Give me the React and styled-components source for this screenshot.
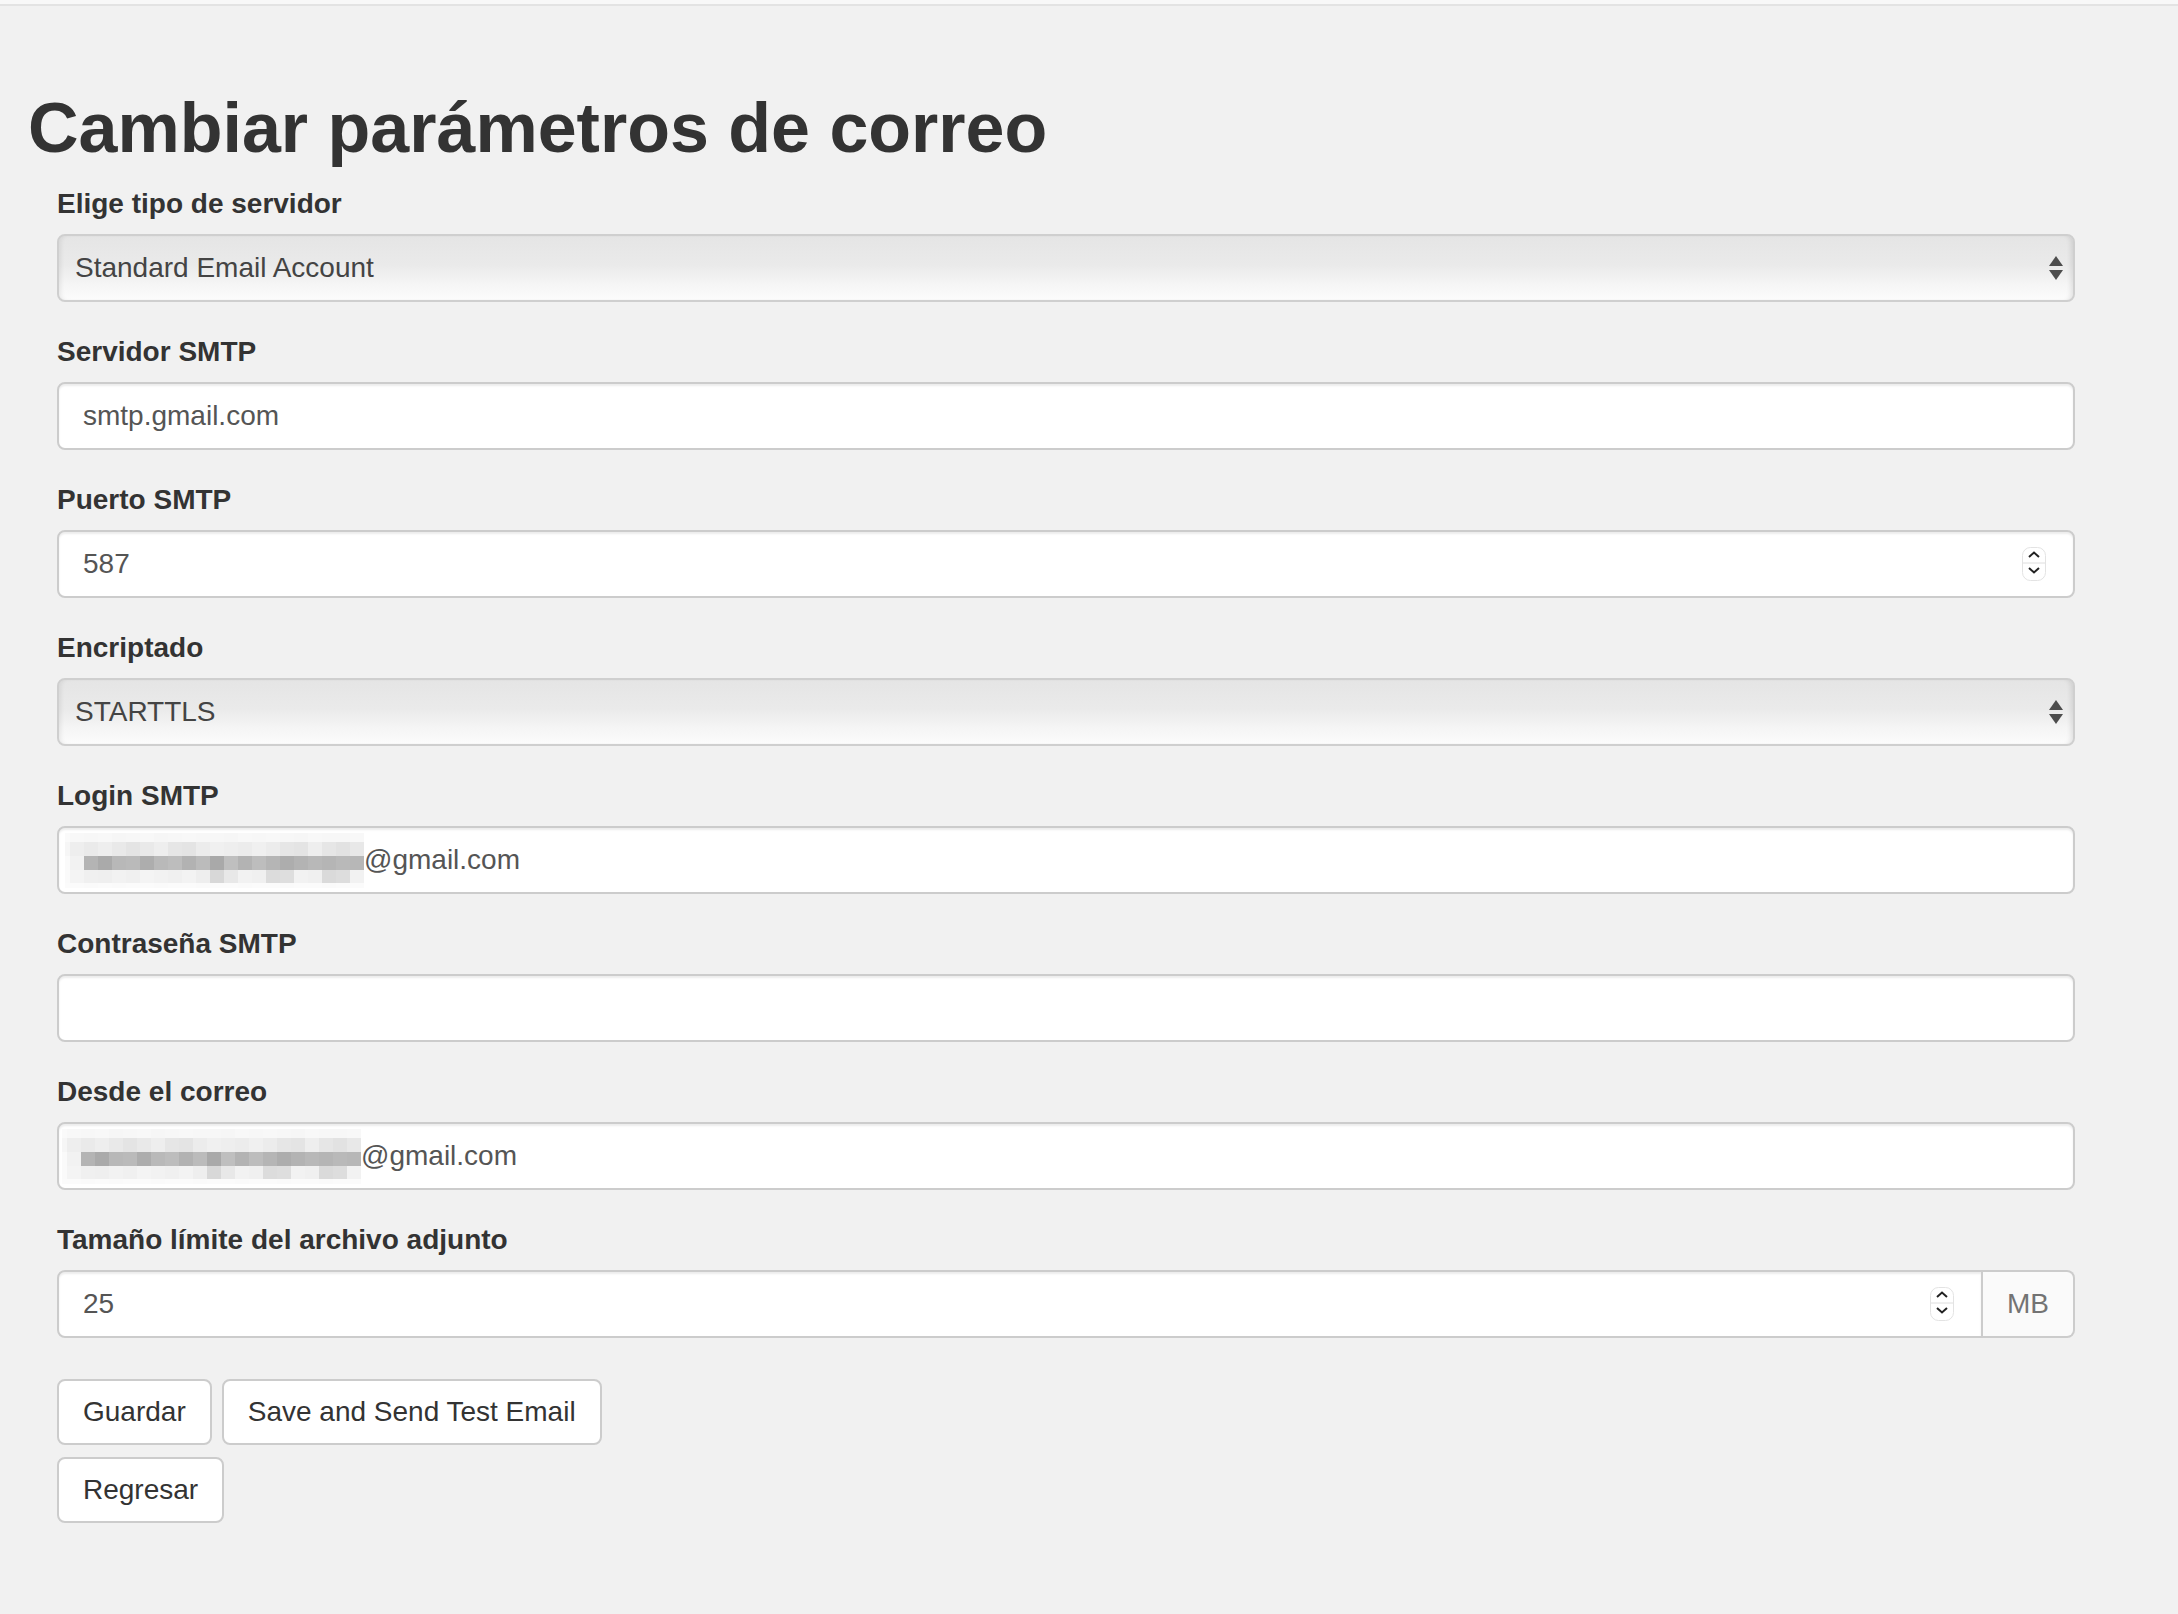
import React from 'react';
import styled, { createGlobalStyle } from 'styled-components';

const GlobalStyle = createGlobalStyle`
    body {
        margin: 0;
        background: #f1f1f1;
        font-family: "Liberation Sans", Arial, Helvetica, sans-serif;
        color: #333;
    }
`;

const TopBar = styled.div`
    height: 4px;
    background: #f8f8f8;
    border-bottom: 2px solid #e3e3e3;
`;

const Page = styled.div`
    padding: 0 28px 80px;
`;

const Title = styled.h1`
    margin: 84px 0 17px;
    font-size: 70px;
    line-height: 77px;
    font-weight: 700;
    color: #333;
`;

const Form = styled.form`
    margin-left: 29px;
    width: 2018px;
`;

const FormGroup = styled.div`
    margin-bottom: 30px;
`;

const Label = styled.label`
    display: block;
    margin-bottom: 10px;
    font-size: 28px;
    line-height: 40px;
    font-weight: 700;
    color: #333;
`;

const Field = styled.div`
    display: flex;
    align-items: center;
    box-sizing: border-box;
    height: 68px;
    padding: 0 ${p => (p.$spin ? '27px' : '24px')} 0 ${p => (p.$masked ? '6px' : '24px')};
    background: #fff;
    border: 2px solid #ccc;
    border-radius: ${p => (p.$grouped ? '8px 0 0 8px' : '8px')};
    box-shadow: inset 0 2px 2px rgba(0, 0, 0, 0.075);
    flex: 1;
`;

const FieldInput = styled.input`
    flex: 1;
    min-width: 0;
    border: none;
    background: transparent;
    padding: 0;
    outline: none;
    font-family: inherit;
    font-size: 28px;
    color: #555;
`;

const SelectBox = styled.div`
    display: flex;
    align-items: center;
    justify-content: space-between;
    box-sizing: border-box;
    height: 68px;
    padding: 0 10px 0 16px;
    border: 2px solid #cfcfcf;
    border-radius: 8px;
    background: linear-gradient(to bottom, #e5e5e5 0%, #eaeaea 45%, #f5f5f5 75%, #fcfcfc 100%);
    box-shadow: inset 4px 0 4px -2px rgba(0, 0, 0, 0.07), inset -5px 0 5px -3px rgba(0, 0, 0, 0.1);
    font-size: 28px;
    color: #444;
`;

const InputGroup = styled.div`
    display: flex;
`;

const Addon = styled.span`
    display: flex;
    align-items: center;
    box-sizing: border-box;
    height: 68px;
    padding: 0 24px;
    background: #fafafa;
    border: 2px solid #ccc;
    border-left: none;
    border-radius: 0 8px 8px 0;
    font-size: 28px;
    color: #737373;
`;

const Buttons = styled.div`
    display: flex;
    flex-wrap: wrap;
    gap: 12px 10px;
    width: 560px;
    margin-top: 41px;
`;

const Button = styled.button`
    box-sizing: border-box;
    height: 66px;
    padding: 0 24px;
    background: #fff;
    border: 2px solid #ccc;
    border-radius: 8px;
    font-family: inherit;
    font-size: 28px;
    color: #333;
`;

const SelectArrows = () => (
    <svg width="14" height="24" viewBox="0 0 14 24">
        <polygon points="0,10 7,0 14,10" fill="#4d4d4d" />
        <polygon points="0,14 14,14 7,24" fill="#4d4d4d" />
    </svg>
);

const Spinner = () => (
    <svg width="24" height="34" viewBox="0 0 24 34">
        <rect x="0.5" y="0.5" width="23" height="33" rx="8" fill="#fff" stroke="#e3e3e3" />
        <line x1="1" y1="16" x2="23" y2="16" stroke="#dedede" />
        <path d="M7 10 L12 5.5 L17 10" fill="none" stroke="#222" strokeWidth="2" />
        <path d="M7 21 L12 25.5 L17 21" fill="none" stroke="#222" strokeWidth="2" />
    </svg>
);

// pixelated redaction over the mail user name
const cellWidths = [5, 14, 14, 14, 14, 14, 14, 14, 14, 14, 14, 14, 14, 14, 14, 14, 14, 14, 14, 14, 14, 14];
const rowHeights = [9, 14, 14, 13, 5];
const shades = [
    ['fa', 'f8', 'f7', 'f8', 'f6', 'f7', 'f8', 'f6', 'f7', 'f8', 'f7', 'f7', 'f6', 'f8', 'f7', 'f8', 'f7', 'f6', 'f8', 'f7', 'f7', 'f8'],
    ['f6', 'ee', 'ea', 'ee', 'e9', 'e4', 'e9', 'ee', 'e6', 'e4', 'ec', 'f0', 'ee', 'ec', 'f0', 'ec', 'e6', 'e4', 'ee', 'e6', 'e2', 'e8'],
    ['fa', 'f2', 'b4', 'aa', 'b8', 'ba', 'ad', 'b9', 'bd', 'b2', 'bb', 'a9', 'bf', 'b3', 'bd', 'b5', 'ad', 'b3', 'b8', 'b5', 'b9', 'b7'],
    ['fa', 'f4', 'f0', 'ef', 'f2', 'f0', 'f4', 'f2', 'f0', 'f3', 'ee', 'd8', 'e8', 'f2', 'f0', 'dc', 'de', 'f2', 'f0', 'da', 'dd', 'f2'],
    ['fb', 'fb', 'fa', 'fb', 'fa', 'fb', 'fb', 'fa', 'fb', 'fb', 'fa', 'fb', 'fb', 'fa', 'fb', 'fb', 'fa', 'fb', 'fb', 'fa', 'fb', 'fb'],
];

const Mosaic = ({ width }) => {
    const cells = [];
    let y = 0;
    rowHeights.forEach((h, r) => {
        let x = 0;
        cellWidths.forEach((w, c) => {
            const s = shades[r][c];
            cells.push(<rect key={r + '-' + c} x={x} y={y} width={w} height={h} fill={'#' + s + s + s} />);
            x += w;
        });
        y += h;
    });
    return (
        <svg width={width} height="55" viewBox="0 0 299 55" preserveAspectRatio="none" style={{ flexShrink: 0 }}>
            {cells}
        </svg>
    );
};

const App = () => {
    return (
        <>
            <GlobalStyle />
            <TopBar />
            <Page>
                <Title>Cambiar parámetros de correo</Title>
                <Form onSubmit={e => e.preventDefault()}>
                    <FormGroup>
                        <Label>Elige tipo de servidor</Label>
                        <SelectBox>
                            <span>Standard Email Account</span>
                            <SelectArrows />
                        </SelectBox>
                    </FormGroup>
                    <FormGroup>
                        <Label>Servidor SMTP</Label>
                        <Field>
                            <FieldInput defaultValue="smtp.gmail.com" />
                        </Field>
                    </FormGroup>
                    <FormGroup>
                        <Label>Puerto SMTP</Label>
                        <Field $spin>
                            <FieldInput defaultValue="587" />
                            <Spinner />
                        </Field>
                    </FormGroup>
                    <FormGroup>
                        <Label>Encriptado</Label>
                        <SelectBox>
                            <span>STARTTLS</span>
                            <SelectArrows />
                        </SelectBox>
                    </FormGroup>
                    <FormGroup>
                        <Label>Login SMTP</Label>
                        <Field $masked>
                            <Mosaic width={299} />
                            <FieldInput defaultValue="@gmail.com" />
                        </Field>
                    </FormGroup>
                    <FormGroup>
                        <Label>Contraseña SMTP</Label>
                        <Field>
                            <FieldInput type="password" />
                        </Field>
                    </FormGroup>
                    <FormGroup>
                        <Label>Desde el correo</Label>
                        <Field $masked style={{ paddingLeft: 3 }}>
                            <Mosaic width={299} />
                            <FieldInput defaultValue="@gmail.com" />
                        </Field>
                    </FormGroup>
                    <FormGroup>
                        <Label>Tamaño límite del archivo adjunto</Label>
                        <InputGroup>
                            <Field $spin $grouped>
                                <FieldInput defaultValue="25" />
                                <Spinner />
                            </Field>
                            <Addon>MB</Addon>
                        </InputGroup>
                    </FormGroup>
                    <Buttons>
                        <Button type="submit">Guardar</Button>
                        <Button type="button">Save and Send Test Email</Button>
                        <Button type="button">Regresar</Button>
                    </Buttons>
                </Form>
            </Page>
        </>
    );
};

export default App;
